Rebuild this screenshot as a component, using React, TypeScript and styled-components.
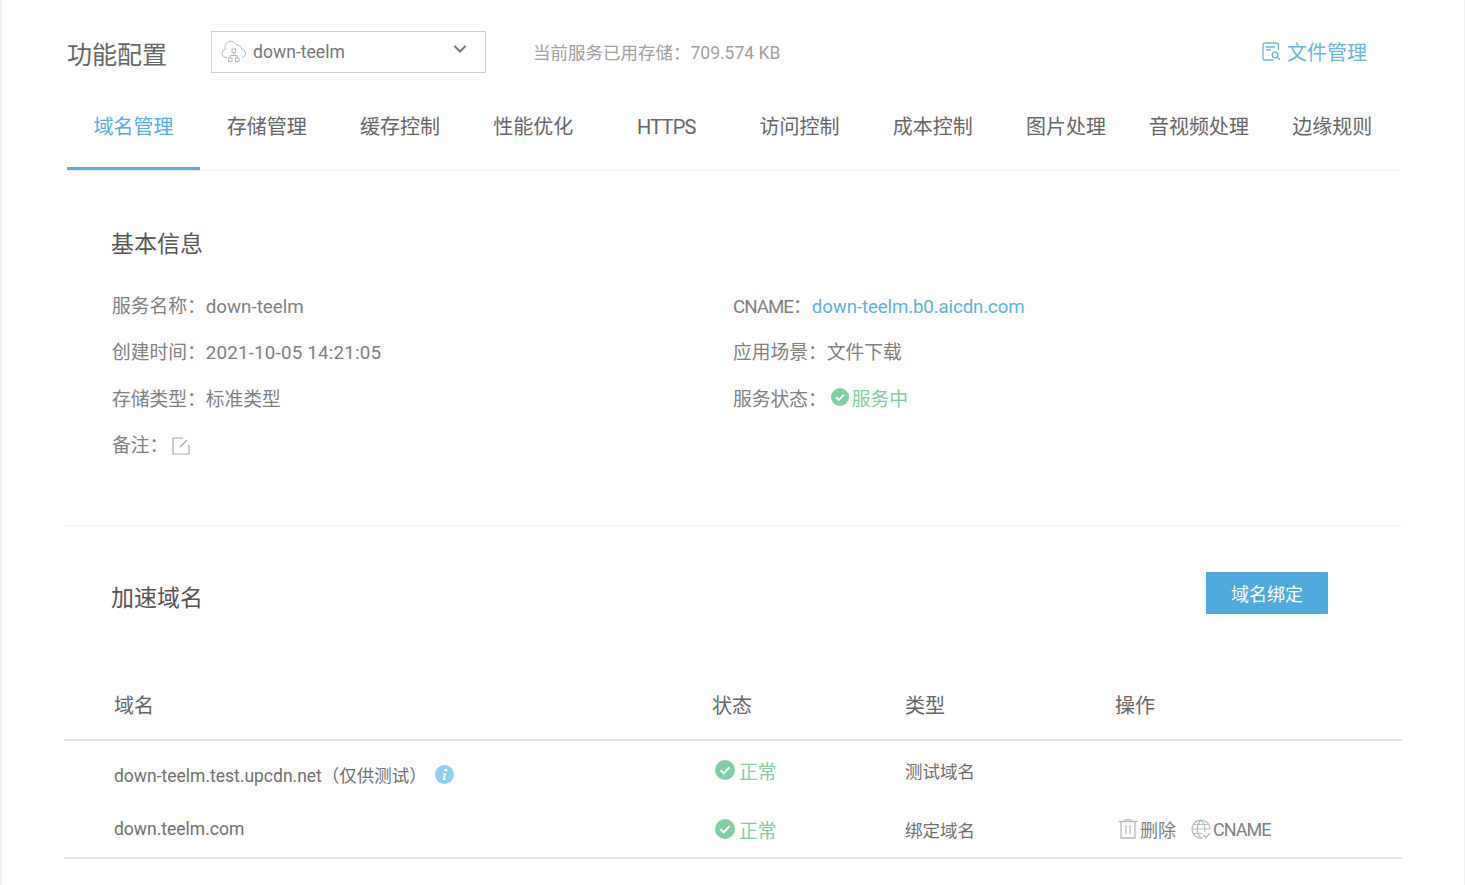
import React from 'react';
import styled, { createGlobalStyle } from 'styled-components';

const GlobalStyle = createGlobalStyle`
  html, body { margin: 0; padding: 0; background: #f0f0f5; }
  body {
    font-family: Roboto, "Noto Sans CJK SC", sans-serif;
    font-weight: 400;
    color: #666;
    overflow: hidden;
  }
`;

const tabs = ['域名管理', '存储管理', '缓存控制', '性能优化', 'HTTPS', '访问控制', '成本控制', '图片处理', '音视频处理', '边缘规则'];

const Page = styled.div`
  width: 1462px;
  height: 885px;
  margin-left: 2px;
  background: #fff;
  overflow: hidden;
`;

const Header = styled.header`
  display: flex;
  align-items: center;
  height: 42px;
  margin: 31px 0 0 65px;
`;

const Title = styled.h1`
  width: 144px;
  margin: 2px 0 0;
  font-size: 25px;
  font-weight: 400;
  color: #666;
`;

const Select = styled.div`
  box-sizing: border-box;
  display: flex;
  align-items: center;
  width: 275px;
  height: 42px;
  padding: 0 18px 0 9px;
  border: 1px solid #ccc;
  font-size: 17.6px;
  color: #777;
  svg:first-child { margin-right: 6px; }
  svg:last-child { margin: -6px 0 0 auto; }
`;

const Usage = styled.span`
  margin: -2px 0 0 47px;
  font-size: 17.5px;
  color: #a0a0a0;
`;

const FileLink = styled.a`
  display: flex;
  align-items: center;
  gap: 6px;
  margin: -2px 97px 0 auto;
  font-size: 20px;
  color: #6db6e4;
`;

const TabBar = styled.nav`
  display: flex;
  height: 97px;
  margin: 0 64px 0 65px;
  border-bottom: 1px solid #eeeef2;
`;

const Tab = styled.div<{ $active?: boolean; $latin?: boolean }>`
  box-sizing: content-box;
  flex: 0 0 133.2px;
  height: 94px;
  line-height: 109px;
  text-align: center;
  font-size: 20px;
  letter-spacing: ${(p) => (p.$latin ? '-0.8px' : '0')};
  color: ${(p) => (p.$active ? '#5aace8' : '#666')};
  border-bottom: 3px solid ${(p) => (p.$active ? '#56ade6' : 'transparent')};
`;

const Section = styled.section`
  margin: 0 62px;
  padding: 0 0 0 48px;
`;

const InfoSection = styled(Section)`
  height: 354px;
  border-bottom: 1px solid #eeeef2;
`;

const SectionTitle = styled.h2`
  margin: 0 0 0 -1px;
  font-size: 23px;
  font-weight: 400;
  color: #555;
`;

const BasicTitle = styled(SectionTitle)`
  padding-top: 58px;
  line-height: 31px;
`;

const InfoGrid = styled.div`
  display: grid;
  grid-template-columns: 621px 1fr;
  grid-auto-rows: 46.3px;
  margin-top: 21.500px;
  font-size: 18.75px;
  color: #808080;
  align-items: center;
`;

const Link = styled.a`
  letter-spacing: -0.15px;
  color: #5eb0e0;
`;

const Cname = styled.span`
  letter-spacing: -1px;
`;

const DateText = styled.span`
  letter-spacing: 0.2px;
`;

const Running = styled.span`
  display: inline-flex;
  align-items: center;
  gap: 3px;
  margin-left: 4px;
  color: #80cfa3;
  vertical-align: bottom;
`;

const EditIcon = styled.svg`
  margin-left: 4px;
  vertical-align: -3px;
`;

const DomainHead = styled.div`
  display: flex;
  align-items: center;
  justify-content: space-between;
  margin: 46px 74px 0 0;
  height: 42px;
`;

const DomainTitle = styled(SectionTitle)`
  padding-top: 6px;
`;

const BindButton = styled.button`
  width: 122px;
  height: 42px;
  border: 0;
  border-radius: 1px;
  background: #4fa9dc;
  color: #fff;
  font: inherit;
  font-size: 18px;
  font-weight: 400;
`;

const Table = styled.div`
  margin: 43px 62px 0;
  color: #707070;
`;

const Row = styled.div<{ $height: number; $border?: number; $top?: number }>`
  display: grid;
  grid-template-columns: 598px 193px 210px 1fr;
  align-items: center;
  height: ${(p) => p.$height}px;
  padding-top: ${(p) => p.$top ?? 0}px;
  padding-left: 50px;
  font-size: 17.5px;
  border-bottom: ${(p) => p.$border ?? 0}px solid #e4e4e8;
`;

const HeadRow = styled(Row)`
  font-size: 20px;
  color: #666;
`;

const DomainCell = styled.span`
  display: flex;
  align-items: center;
  padding-top: 8px;
  svg { margin-left: 8px; }
`;

const Status = styled.span`
  display: inline-flex;
  align-items: center;
  gap: 4px;
  margin-left: 3px;
  color: #80cfa3;
  font-size: 18.75px;
`;

const Actions = styled.span`
  display: flex;
  align-items: center;
  margin-left: 3px;
  color: #808080;
  font-size: 18px;
`;

const Action = styled.span`
  display: inline-flex;
  align-items: center;
  gap: 2px;
  margin-right: 15px;
`;

const CheckCircle = ({ size = 18 }: { size?: number }) => (
  <svg width={size} height={size} viewBox="0 0 20 20">
    <circle cx="10" cy="10" r="10" fill="#80cfa3" />
    <path d="M5.500 10.300l3.200 3 5.800-6" fill="none" stroke="#fff" strokeWidth="2" />
  </svg>
);

const CloudIcon = () => (
  <svg width="26" height="26" viewBox="0 0 26 26" fill="none" stroke="#bbb" strokeWidth="1">
    <path d="M6 18.500H5a4.200 4.200 0 0 1-.6-8.300A5.800 5.800 0 0 1 15.500 6a4.600 4.600 0 0 1 5.200 4.200 4.200 4.200 0 0 1 .6 8.300" />
    <rect x="11" y="10" width="3.500" height="3.500" />
    <rect x="7.500" y="19" width="3.500" height="3.500" />
    <rect x="14.500" y="19" width="3.500" height="3.500" />
    <path d="M12.700 13.500V16.500M9.200 19v-2.500h7.100V19" />
  </svg>
);

const Chevron = () => (
  <svg width="14" height="10" viewBox="0 0 14 10" fill="none" stroke="#777" strokeWidth="2">
    <path d="M1.500 2l5.500 5.500L12.500 2" />
  </svg>
);

const FileIcon = () => (
  <svg width="19" height="19" viewBox="0 0 19 19" fill="none" stroke="#6db6e4" strokeWidth="1.300">
    <path d="M16.500 8V3a2 2 0 0 0-2-2H3a2 2 0 0 0-2 2v13a2 2 0 0 0 2 2h8.500" />
    <path d="M4 5h9M4 8h5" />
    <circle cx="13" cy="13" r="2.800" />
    <path d="M15 15l3 2.800" />
  </svg>
);

const InfoIcon = () => (
  <svg width="19" height="19" viewBox="0 0 19 19">
    <circle cx="9.500" cy="9.500" r="9.500" fill="#8fcfee" />
    <circle cx="10.800" cy="5" r="1.600" fill="#fff" />
    <path d="M8 8.300h3.300l-1.500 5.700h1.200v1H7.600l1.400-5.700H8z" fill="#fff" />
  </svg>
);

const TrashIcon = () => (
  <svg width="20" height="20" viewBox="0 0 20 20" fill="none" stroke="#bbb" strokeWidth="1.300">
    <path d="M0.500 2.500h19M7 2.500V0.800h6v1.700M3 2.500v16.500h14V2.500M8 6v9M12 6v9" />
  </svg>
);

const GlobeIcon = () => (
  <svg width="20" height="20" viewBox="0 0 20 20" fill="none" stroke="#bbb" strokeWidth="1.200">
    <path d="M11.500 18.900A9 9 0 1 1 19 10.500" />
    <path d="M10 1c-5 5-5 13 0 18M10 1c3.500 3.500 4.500 8 3.500 12M1 10h18M2.300 5.500h15.400M2.300 14.500h9" />
    <path d="M12.500 16l2.500 2.500 4-4.500" strokeWidth="1.400" />
  </svg>
);

export default function App() {
  return (
    <Page>
      <GlobalStyle />
      <Header>
        <Title>功能配置</Title>
        <Select>
          <CloudIcon />
          down-teelm
          <Chevron />
        </Select>
        <Usage>当前服务已用存储：709.574 KB</Usage>
        <FileLink>
          <FileIcon />
          文件管理
        </FileLink>
      </Header>
      <TabBar>
        {tabs.map((t, i) => (
          <Tab key={t} $active={i === 0} $latin={t === 'HTTPS'}>{t}</Tab>
        ))}
      </TabBar>
      <InfoSection>
        <BasicTitle>基本信息</BasicTitle>
        <InfoGrid>
          <div>服务名称：down-teelm</div>
          <div><Cname>CNAME</Cname>：<Link>down-teelm.b0.aicdn.com</Link></div>
          <div>创建时间：<DateText>2021-10-05 14:21:05</DateText></div>
          <div>应用场景：文件下载</div>
          <div>存储类型：标准类型</div>
          <div>服务状态：<Running><CheckCircle />服务中</Running></div>
          <div>
            备注：
            <EditIcon width="18" height="18" viewBox="0 0 18 18" fill="none" stroke="#aaa" strokeWidth="1.200">
              <path d="M17 8v9H1V1h10M8 10l7-7" />
            </EditIcon>
          </div>
        </InfoGrid>
      </InfoSection>
      <Section>
        <DomainHead>
          <DomainTitle>加速域名</DomainTitle>
          <BindButton>域名绑定</BindButton>
        </DomainHead>
      </Section>
      <Table>
        <HeadRow $height={70} $top={12} $border={2}>
          <span>域名</span>
          <span>状态</span>
          <span>类型</span>
          <span>操作</span>
        </HeadRow>
        <Row $height={58}>
          <DomainCell>down-teelm.test.upcdn.net（仅供测试）<InfoIcon /></DomainCell>
          <Status><CheckCircle size={20} />正常</Status>
          <span>测试域名</span>
          <span />
        </Row>
        <Row $height={56} $top={2} $border={2}>
          <span>down.teelm.com</span>
          <Status><CheckCircle size={20} />正常</Status>
          <span>绑定域名</span>
          <Actions>
            <Action><TrashIcon />删除</Action>
            <Action><GlobeIcon /><Cname>CNAME</Cname></Action>
          </Actions>
        </Row>
      </Table>
    </Page>
  );
}
